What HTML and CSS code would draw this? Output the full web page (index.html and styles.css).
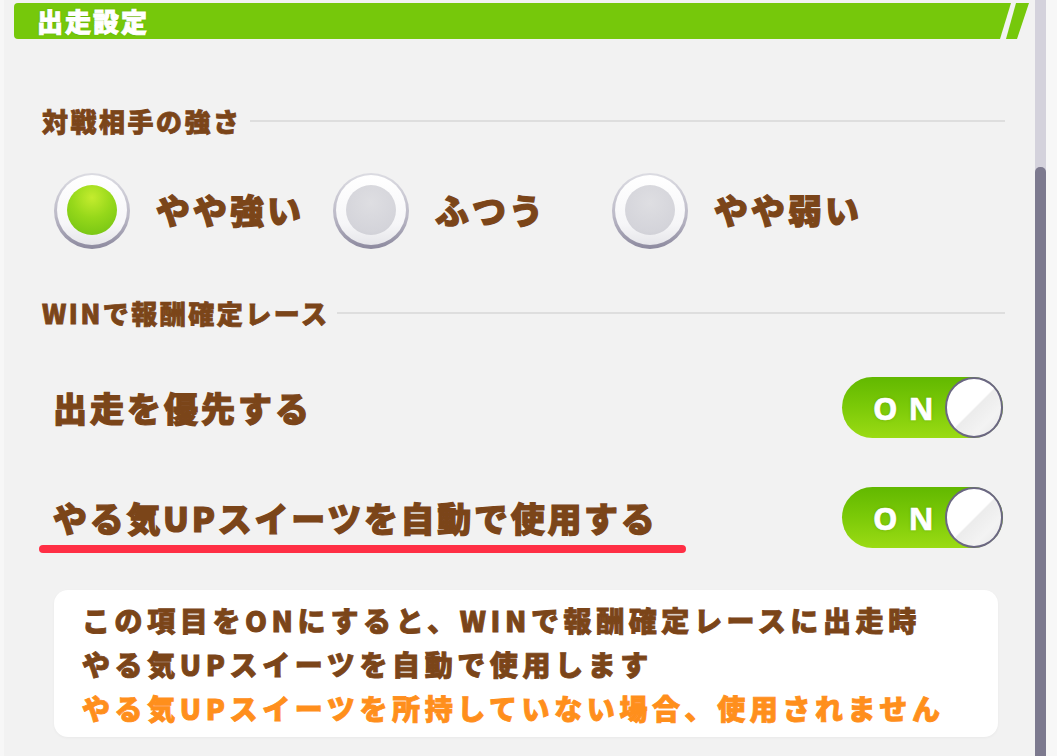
FILE: index.html
```html
<!DOCTYPE html>
<html lang="ja">
<head>
  <meta charset="UTF-8" />
  <title>出走設定</title>
  <link rel="stylesheet" href="styles.css">
</head>
<body>
  <div class="screen">
    <div class="panel">
      <!-- Title -->
      <div class="title-bar">
        <div class="title-fill">出走設定</div>
        <div class="title-stripe"></div>
      </div>

      <!-- Opponent strength -->
      <div class="section-head first">対戦相手の強さ</div>
      <div class="radio-row">
        <div class="radio-item">
          <div class="radio"><div class="radio-face"><div class="radio-dot on"></div></div></div>
          <span class="radio-label">やや強い</span>
        </div>
        <div class="radio-item">
          <div class="radio"><div class="radio-face"><div class="radio-dot"></div></div></div>
          <span class="radio-label">ふつう</span>
        </div>
        <div class="radio-item">
          <div class="radio"><div class="radio-face"><div class="radio-dot"></div></div></div>
          <span class="radio-label">やや弱い</span>
        </div>
      </div>

      <!-- WIN reward races -->
      <div class="section-head second">WINで報酬確定レース</div>
      <div class="setting-row">
        <span class="setting-label">出走を優先する</span>
        <div class="toggle"><span class="toggle-text">ON</span><div class="knob"></div></div>
      </div>
      <div class="setting-row">
        <span class="setting-label long">やる気UPスイーツを自動で使用する</span>
        <div class="toggle"><span class="toggle-text">ON</span><div class="knob"></div></div>
      </div>
      <div class="underline"></div>

      <div class="info-box">
        <p>この項目をONにすると、WINで報酬確定レースに出走時</p>
        <p>やる気UPスイーツを自動で使用します</p>
        <p class="warn">やる気UPスイーツを所持していない場合、使用されません</p>
      </div>
    </div>

    <div class="scrollbar"><div class="thumb"></div></div>
  </div>
</body>
</html>
```

FILE: styles.css
```css
body {
  margin: 0;
  background-color: #f7f7f7;
  font-family: "Noto Sans CJK JP", "Noto Sans", sans-serif;
  font-weight: 900;
  color: #7b4519;
  -webkit-text-stroke: 1.2px currentColor;
  overflow: hidden;
}
.screen {
  display: flex;
  height: 756px;
}
.panel {
  width: 1031px;
  margin-left: 4px;
  padding-top: 3px;
  background-color: #f2f2f2;
  box-sizing: border-box;
}
.title-bar {
  display: flex;
  height: 36px;
  margin-left: 10px;
}
.title-fill {
  width: 997px;
  height: 36px;
  background-color: #76c80b;
  border-radius: 4px 0 0 4px;
  clip-path: polygon(0 0, 100% 0, calc(100% - 11px) 100%, 0 100%);
  color: white;
  font-size: 26px;
  line-height: 36px;
  letter-spacing: 2px;
  padding-left: 23px;
  box-sizing: border-box;
  -webkit-text-stroke: 0.9px white;
  text-shadow: 0 0 2px #4e8f00;
}
.title-stripe {
  width: 23px;
  height: 36px;
  margin-left: -5px;
  background-color: #76c80b;
  clip-path: polygon(10px 0, 23px 0, 11px 100%, 0 100%);
}
.section-head {
  display: flex;
  align-items: center;
  font-size: 26px;
  line-height: 30px;
  letter-spacing: 2.5px;
  padding-left: 38px;
  padding-right: 30px;
  -webkit-text-stroke: 0.8px currentColor;
}
.section-head::after {
  content: "";
  flex: 1;
  height: 2px;
  margin-left: 8px;
  background-color: #dedede;
}
.section-head.first {
  margin-top: 67px;
}
.section-head.second {
  margin-top: 49px;
}
.radio-row {
  display: flex;
  margin-top: 37px;
  padding-left: 50px;
}
.radio-item {
  display: flex;
  align-items: center;
  width: 279px;
}
.radio {
  width: 76px;
  height: 76px;
  border-radius: 50%;
  background: linear-gradient(180deg, #dcdce2 0%, #bdbbc8 55%, #8c899e 100%);
  display: flex;
  justify-content: center;
  padding-top: 2px;
  box-sizing: border-box;
}
.radio-face {
  width: 70px;
  height: 70px;
  border-radius: 50%;
  background: linear-gradient(180deg, #ffffff 0%, #f6f6f8 70%, #e6e6ea 100%);
  display: flex;
  justify-content: center;
  align-items: center;
}
.radio-dot {
  width: 50px;
  height: 50px;
  border-radius: 50%;
  background: radial-gradient(circle at 50% 35%, #dedee2 0%, #d4d4da 70%, #cacad2 100%);
}
.radio-dot.on {
  background: radial-gradient(circle at 50% 25%, #c4ec2e 0%, #96d81a 45%, #6ec012 100%);
}
.radio-label {
  margin-left: 26px;
  font-size: 34px;
  letter-spacing: 3px;
  padding-bottom: 4px;
}
.setting-row {
  display: flex;
  align-items: center;
  justify-content: space-between;
  padding-left: 49px;
  padding-right: 32px;
  margin-top: 49px;
}
.setting-label {
  font-size: 34px;
  letter-spacing: 3px;
}
.setting-label.long {
  letter-spacing: 2.7px;
}
.toggle {
  display: flex;
  align-items: center;
  justify-content: space-between;
  width: 161px;
  height: 61px;
  border-radius: 31px;
  background: linear-gradient(180deg, #62b800 0%, #7cca08 50%, #9bdb14 100%);
  padding-left: 31px;
  box-sizing: border-box;
}
.toggle-text {
  color: white;
  font-family: "Noto Sans", "Noto Sans CJK JP", sans-serif;
  font-weight: 700;
  font-size: 31px;
  letter-spacing: 11px;
  -webkit-text-stroke: 0.6px white;
  text-shadow: 0 0 3px rgba(80, 140, 0, 0.6);
}
.knob {
  width: 61px;
  height: 61px;
  border-radius: 50%;
  border: 2.5px solid #6b6782;
  box-sizing: border-box;
  background: linear-gradient(135deg, #ffffff 0%, #ffffff 50%, #ececec 52%, #f3f3f3 75%, #e6e6e6 100%);
  margin-top: -1px;
}
.underline {
  width: 647px;
  height: 8px;
  margin-top: -3px;
  margin-left: 35px;
  border-radius: 4px;
  background-color: #ff2f45;
}
.info-box {
  width: 944px;
  margin-top: 37px;
  margin-left: 50px;
  padding: 8px 0 7px 28px;
  background-color: white;
  border-radius: 14px;
  box-sizing: border-box;
  box-shadow: 0 1px 3px rgba(0, 0, 0, 0.04);
}
.info-box p {
  margin: 0;
  font-size: 28px;
  line-height: 44px;
  letter-spacing: 4.6px;
  white-space: nowrap;
  -webkit-text-stroke: 0.9px currentColor;
}
.info-box .warn {
  color: #ff8f1c;
}
.scrollbar {
  display: flex;
  flex-direction: column;
  width: 11px;
  background-color: #d4d2dc;
}
.thumb {
  flex: 1;
  margin-top: 167px;
  background-color: #7d7a8f;
  border-radius: 5px 5px 0 0;
}
```
